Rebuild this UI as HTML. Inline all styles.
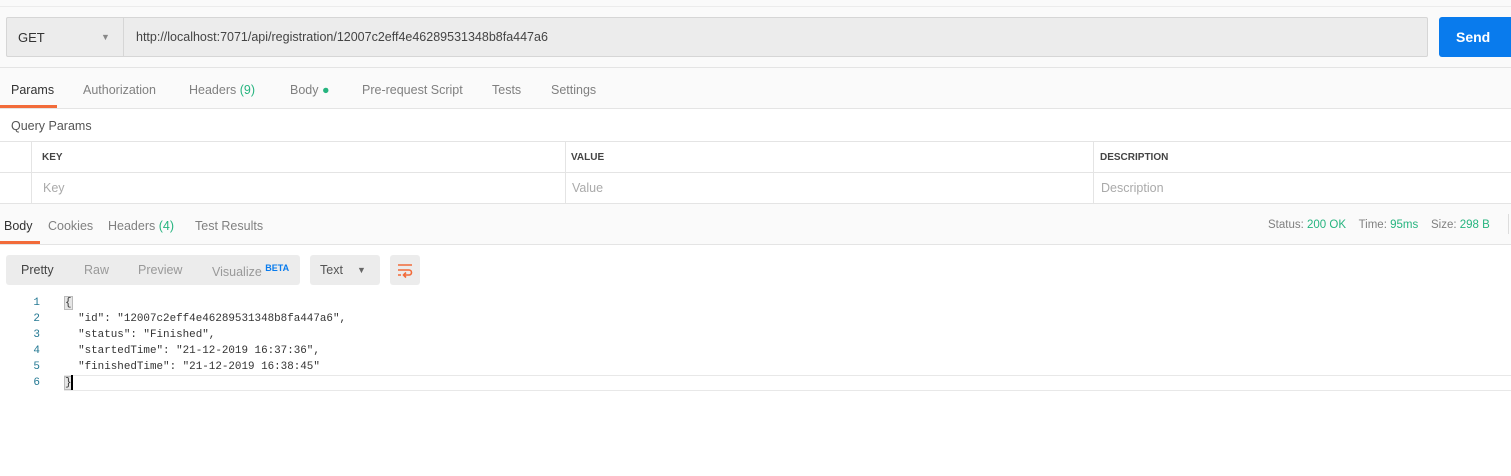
<!DOCTYPE html>
<html><head><style>
body{margin:0;width:1511px;height:476px;background:#fff;font-family:"Liberation Sans",sans-serif;position:relative;overflow:hidden;color:#505050}
.a{position:absolute}
.t{font-size:12.5px;color:#808080;position:absolute}
.g{color:#26b47f}
.hl{position:absolute;height:1px;background:#e4e4e4;left:0;width:1511px}
.code{font-family:"Liberation Mono",monospace;font-size:10.9px;color:#333;position:absolute;left:65px;line-height:16px;white-space:pre}
.num{font-family:"Liberation Mono",monospace;font-size:11px;color:#237893;position:absolute;left:30px;line-height:16px;text-align:right;width:10px}
</style></head><body>
<div class="a" style="left:0;top:0;width:1511px;height:108px;background:#fafafa"></div>
<div class="hl" style="top:6px;background:#ececec"></div>
<div class="a" style="left:6px;top:17px;width:1420px;height:38px;background:#ececec;border:1px solid #d6d6d6;border-radius:2px"></div>
<div class="a" style="left:123px;top:18px;width:1px;height:38px;background:#d6d6d6"></div>
<div class="a" style="left:18px;top:30px;font-size:13px;color:#333">GET</div>
<div class="a" style="left:101px;top:32px;font-size:9px;color:#888">▼</div>
<div class="a" style="left:136px;top:30px;font-size:12.5px;color:#444">http://localhost:7071/api/registration/12007c2eff4e46289531348b8fa447a6</div>
<div class="a" style="left:1439px;top:17px;width:72px;height:40px;background:#097bed;border-radius:3px 0 0 3px"></div>
<div class="a" style="left:1456px;top:29px;font-size:14px;font-weight:bold;color:#fff">Send</div>
<div class="hl" style="top:67px"></div>
<div class="t" style="left:11px;top:83px;color:#333">Params</div>
<div class="t" style="left:83px;top:83px">Authorization</div>
<div class="t" style="left:189px;top:83px">Headers <span class="g">(9)</span></div>
<div class="t" style="left:290px;top:83px">Body <span class="g">●</span></div>
<div class="t" style="left:362px;top:83px">Pre-request Script</div>
<div class="t" style="left:492px;top:83px">Tests</div>
<div class="t" style="left:551px;top:83px">Settings</div>
<div class="a" style="left:0;top:105px;width:57px;height:3px;background:#f26b3a"></div>
<div class="hl" style="top:108px"></div>
<div class="a" style="left:11px;top:119px;font-size:12.5px;color:#555">Query Params</div>
<div class="hl" style="top:141px"></div>
<div class="hl" style="top:172px"></div>
<div class="hl" style="top:203px"></div>
<div class="a" style="left:31px;top:141px;width:1px;height:63px;background:#e4e4e4"></div>
<div class="a" style="left:565px;top:141px;width:1px;height:63px;background:#e4e4e4"></div>
<div class="a" style="left:1093px;top:141px;width:1px;height:63px;background:#e4e4e4"></div>
<div class="a" style="left:42px;top:152px;font-size:10px;font-weight:bold;color:#444">KEY</div>
<div class="a" style="left:571px;top:152px;font-size:10px;font-weight:bold;color:#444">VALUE</div>
<div class="a" style="left:1100px;top:152px;font-size:10px;font-weight:bold;color:#444">DESCRIPTION</div>
<div class="t" style="left:43px;top:181px;color:#aaa">Key</div>
<div class="t" style="left:572px;top:181px;color:#aaa">Value</div>
<div class="t" style="left:1101px;top:181px;color:#aaa">Description</div>
<div class="a" style="left:0;top:204px;width:1511px;height:40px;background:#fafafa"></div>
<div class="t" style="left:4px;top:219px;color:#333">Body</div>
<div class="t" style="left:48px;top:219px">Cookies</div>
<div class="t" style="left:108px;top:219px">Headers <span class="g">(4)</span></div>
<div class="t" style="left:195px;top:219px">Test Results</div>
<div class="a" style="left:0;top:241px;width:40px;height:3px;background:#f26b3a"></div>
<div class="hl" style="top:244px"></div>
<div class="a" style="left:1268px;top:219px;font-size:11.5px;color:#808080">Status: <span class="g">200 OK</span> &nbsp;&nbsp; Time: <span class="g">95ms</span> &nbsp;&nbsp; Size: <span class="g">298 B</span></div>
<div class="a" style="left:1508px;top:214px;width:1px;height:20px;background:#ddd"></div>
<div class="a" style="left:6px;top:255px;width:294px;height:30px;background:#ececec;border-radius:3px"></div>
<div class="t" style="left:21px;top:263px;color:#444">Pretty</div>
<div class="t" style="left:84px;top:263px;color:#999">Raw</div>
<div class="t" style="left:138px;top:263px;color:#999">Preview</div>
<div class="t" style="left:212px;top:263px;color:#999">Visualize <sup style="font-size:9px;color:#097bed;font-weight:bold">BETA</sup></div>
<div class="a" style="left:310px;top:255px;width:70px;height:30px;background:#ececec;border-radius:3px"></div>
<div class="t" style="left:320px;top:263px;color:#555">Text</div>
<div class="a" style="left:357px;top:265px;font-size:9px;color:#666">▼</div>
<div class="a" style="left:390px;top:255px;width:30px;height:30px;background:#ececec;border-radius:3px"></div>
<svg class="a" style="left:396px;top:261px" width="18" height="18" viewBox="0 0 18 18" fill="none" stroke="#f26b3a" stroke-width="1.6"><path d="M2 4h14M2 9h11a2.5 2.5 0 0 1 0 5H8M10 11.5 7.5 14 10 16.5M2 14h3"/></svg>
<div class="a" style="left:64px;top:375px;width:1447px;height:14px;border-top:1px solid #e8e8e8;border-bottom:1px solid #e8e8e8"></div>
<div class="num" style="top:295px">1<br>2<br>3<br>4<br>5<br>6</div>
<div class="code" style="top:295px"><span style="background:#e6e6e6;outline:1px solid #bbb">{</span>
  "id": "12007c2eff4e46289531348b8fa447a6",
  "status": "Finished",
  "startedTime": "21-12-2019 16:37:36",
  "finishedTime": "21-12-2019 16:38:45"
<span style="background:#e6e6e6;outline:1px solid #bbb">}</span></div>
<div class="a" style="left:71px;top:375px;width:2px;height:15px;background:#000"></div>
</body></html>
